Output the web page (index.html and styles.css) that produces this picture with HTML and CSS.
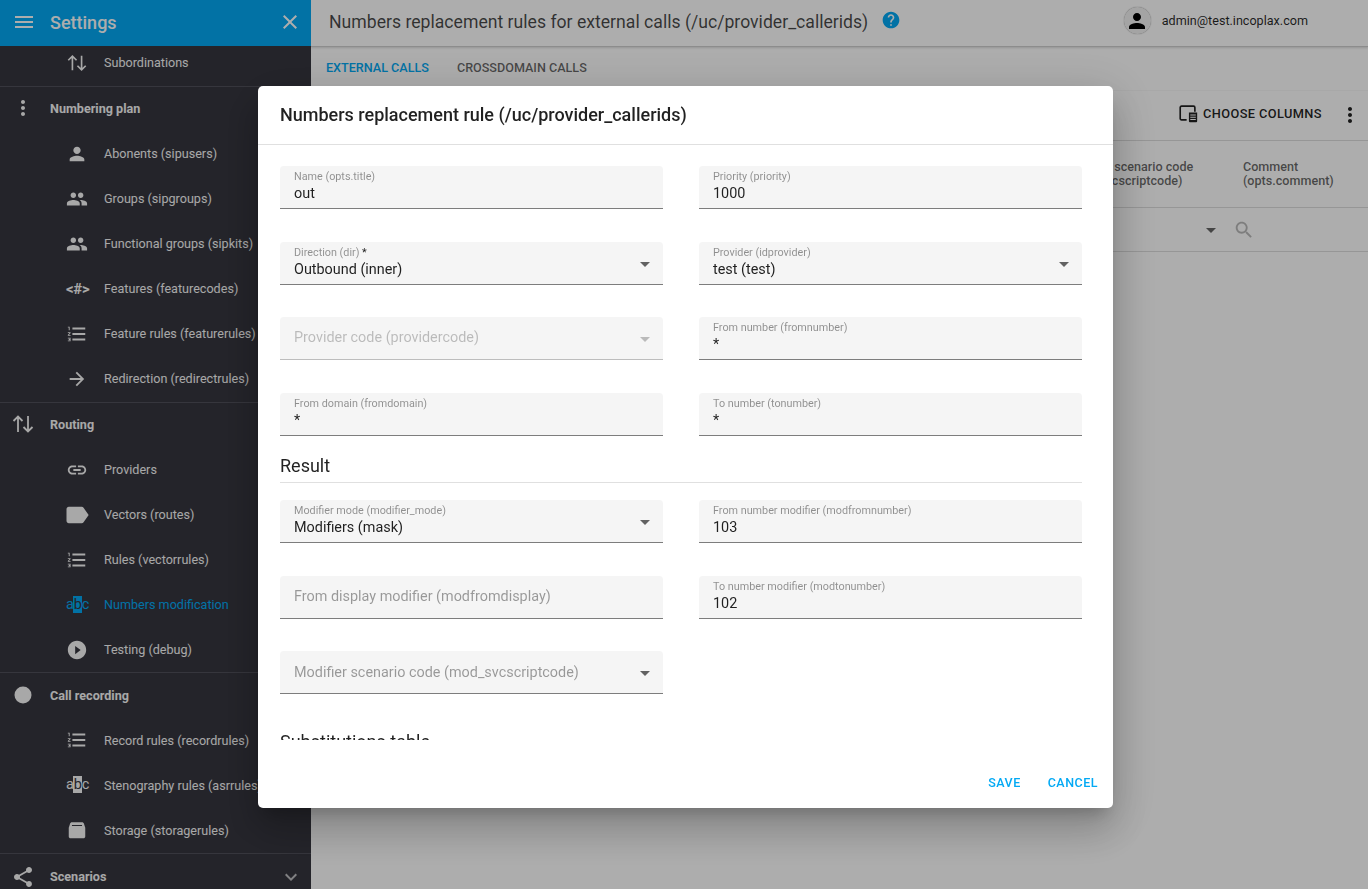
FILE: index.html
```html
<!DOCTYPE html>
<html lang="en">
<head>
<meta charset="utf-8">
<title>Numbers replacement rules</title>
<link rel="stylesheet" href="styles.css">
</head>
<body>
<div class="app">
  <aside class="sidebar">
    <header class="side-head">
      <svg class="ic-24" viewBox="0 0 24 24"><path d="M3 18h18v-2H3v2zm0-5h18v-2H3v2zm0-7v2h18V6H3z"/></svg>
      <span class="side-title">Settings</span>
      <svg class="ic-24 side-close" viewBox="0 0 24 24"><path d="M19 6.410L17.590 5 12 10.590 6.410 5 5 6.410 10.590 12 5 17.590 6.410 19 12 13.410 17.590 19 19 17.590 13.410 12z"/></svg>
    </header>
    <nav class="side-scroll">
      <section class="group first">
        <div class="item"><svg class="ic-item" viewBox="0 0 24 24"><path class="thin" d="M7 20V4.500M2.500 9L7 4.500 11.500 9M17 4v15.500M12.500 15l4.500 4.500 4.500-4.500"/></svg><span>Subordinations</span></div>
      </section>
      <section class="group">
        <div class="group-head"><svg class="ic-group" viewBox="0 0 24 24"><path d="M12 8c1.100 0 2-.9 2-2s-.9-2-2-2-2 .9-2 2 .9 2 2 2zm0 2c-1.100 0-2 .9-2 2s.9 2 2 2 2-.9 2-2-.9-2-2-2zm0 6c-1.100 0-2 .9-2 2s.9 2 2 2 2-.9 2-2-.9-2-2-2z"/></svg><span>Numbering plan</span></div>
        <div class="item"><svg class="ic-item" viewBox="0 0 24 24"><path d="M12 12c2.210 0 4-1.790 4-4s-1.790-4-4-4-4 1.790-4 4 1.790 4 4 4zm0 2c-2.670 0-8 1.340-8 4v2h16v-2c0-2.660-5.330-4-8-4z"/></svg><span>Abonents (sipusers)</span></div>
        <div class="item"><svg class="ic-item" viewBox="0 0 24 24"><path d="M16 11c1.660 0 2.990-1.340 2.990-3S17.660 5 16 5c-1.660 0-3 1.340-3 3s1.340 3 3 3zm-8 0c1.660 0 2.990-1.340 2.990-3S9.660 5 8 5C6.340 5 5 6.340 5 8s1.340 3 3 3zm0 2c-2.330 0-7 1.170-7 3.500V19h14v-2.500c0-2.330-4.670-3.500-7-3.500zm8 0c-.29 0-.62.02-.97.05 1.160.84 1.970 1.970 1.970 3.450V19h6v-2.500c0-2.330-4.670-3.500-7-3.500z"/></svg><span>Groups (sipgroups)</span></div>
        <div class="item"><svg class="ic-item" viewBox="0 0 24 24"><path d="M16 11c1.660 0 2.990-1.340 2.990-3S17.660 5 16 5c-1.660 0-3 1.340-3 3s1.340 3 3 3zm-8 0c1.660 0 2.990-1.340 2.990-3S9.660 5 8 5C6.340 5 5 6.340 5 8s1.340 3 3 3zm0 2c-2.330 0-7 1.170-7 3.500V19h14v-2.500c0-2.330-4.670-3.500-7-3.500zm8 0c-.29 0-.62.02-.97.05 1.160.84 1.970 1.970 1.970 3.450V19h6v-2.500c0-2.330-4.670-3.500-7-3.500z"/></svg><span>Functional groups (sipkits)</span></div>
        <div class="item"><span class="glyph-code">&lt;#&gt;</span><span>Features (featurecodes)</span></div>
        <div class="item"><svg class="ic-item" viewBox="0 0 24 24"><path d="M2 17h2v.5H3v1h1v.5H2v1h3v-4H2v1zm1-9h1V4H2v1h1v3zm-1 3h1.800L2 13.100v.9h3v-1H3.200L5 10.900V10H2v1zm5-6v2h14V5H7zm0 14h14v-2H7v2zm0-6h14v-2H7v2z"/></svg><span>Feature rules (featurerules)</span></div>
        <div class="item"><svg class="ic-item" viewBox="0 0 24 24"><path d="M4 11v2h12L10.500 18.500l1.420 1.420L19.840 12l-7.920-7.920L10.500 5.500 16 11H4z"/></svg><span>Redirection (redirectrules)</span></div>
      </section>
      <section class="group">
        <div class="group-head"><svg class="ic-group" viewBox="0 0 24 24"><path class="thin" d="M7 20V4.500M2.500 9L7 4.500 11.500 9M17 4v15.500M12.500 15l4.500 4.500 4.500-4.500"/></svg><span>Routing</span></div>
        <div class="item"><svg class="ic-item" viewBox="0 0 24 24"><path d="M3.900 12c0-1.710 1.390-3.100 3.100-3.100h4V7H7c-2.760 0-5 2.240-5 5s2.240 5 5 5h4v-1.900H7c-1.710 0-3.100-1.390-3.100-3.100zM8 13h8v-2H8v2zm9-6h-4v1.900h4c1.710 0 3.100 1.390 3.100 3.100s-1.390 3.100-3.100 3.100h-4V17h4c2.760 0 5-2.240 5-5s-2.240-5-5-5z"/></svg><span>Providers</span></div>
        <div class="item"><svg class="ic-item ic-label" viewBox="0 0 24 24"><path d="M17.630 5.840C17.270 5.330 16.670 5 16 5L5 5.010C3.900 5.010 3 5.900 3 7v10c0 1.100.9 1.990 2 1.990L16 19c.67 0 1.270-.33 1.630-.84L22 12l-4.370-6.160z"/></svg><span>Vectors (routes)</span></div>
        <div class="item"><svg class="ic-item" viewBox="0 0 24 24"><path d="M2 17h2v.5H3v1h1v.5H2v1h3v-4H2v1zm1-9h1V4H2v1h1v3zm-1 3h1.800L2 13.100v.9h3v-1H3.200L5 10.900V10H2v1zm5-6v2h14V5H7zm0 14h14v-2H7v2zm0-6h14v-2H7v2z"/></svg><span>Rules (vectorrules)</span></div>
        <div class="item active"><span class="glyph-abc">a<b>b</b>c</span><span>Numbers modification</span></div>
        <div class="item"><svg class="ic-item" viewBox="0 0 24 24"><path d="M12 2C6.480 2 2 6.480 2 12s4.480 10 10 10 10-4.480 10-10S17.520 2 12 2zm-2 14.500v-9l6 4.500-6 4.500z"/></svg><span>Testing (debug)</span></div>
      </section>
      <section class="group">
        <div class="group-head"><svg class="ic-group" viewBox="0 0 24 24"><circle cx="12" cy="12" r="8.500"/></svg><span>Call recording</span></div>
        <div class="item"><svg class="ic-item" viewBox="0 0 24 24"><path d="M2 17h2v.5H3v1h1v.5H2v1h3v-4H2v1zm1-9h1V4H2v1h1v3zm-1 3h1.800L2 13.100v.9h3v-1H3.200L5 10.900V10H2v1zm5-6v2h14V5H7zm0 14h14v-2H7v2zm0-6h14v-2H7v2z"/></svg><span>Record rules (recordrules)</span></div>
        <div class="item"><span class="glyph-abc">a<b>b</b>c</span><span>Stenography rules (asrrules)</span></div>
        <div class="item"><svg class="ic-item" viewBox="0 0 24 24"><path d="M6.500 3.500h11c1 0 1.700.6 2 1.500L21 9.500V19c0 1.100-.9 2-2 2H5c-1.100 0-2-.9-2-2V9.500L4.500 5c.3-.9 1-1.500 2-1.500zM6.500 6.500v1h11v-1z" fill-rule="evenodd"/></svg><span>Storage (storagerules)</span></div>
      </section>
      <section class="group">
        <div class="group-head"><svg class="ic-group" viewBox="0 0 24 24"><path d="M18 16.080c-.76 0-1.440.3-1.960.77L8.910 12.700c.05-.23.09-.46.09-.7s-.04-.47-.09-.7l7.050-4.110c.54.5 1.250.81 2.040.81 1.660 0 3-1.340 3-3s-1.340-3-3-3-3 1.340-3 3c0 .24.04.47.09.7L8.040 9.810C7.500 9.310 6.790 9 6 9c-1.660 0-3 1.340-3 3s1.340 3 3 3c.79 0 1.500-.31 2.040-.81l7.120 4.160c-.05.21-.08.43-.08.65 0 1.610 1.310 2.920 2.920 2.920 1.610 0 2.920-1.310 2.920-2.920s-1.310-2.920-2.920-2.920z"/></svg><span>Scenarios</span><svg class="ic-24 chevron" viewBox="0 0 24 24"><path d="M7.410 8.590L12 13.170l4.590-4.580L18 10l-6 6-6-6 1.410-1.410z"/></svg></div>
      </section>
    </nav>
  </aside>

  <main class="main">
    <header class="topbar">
      <h1 class="page-title">Numbers replacement rules for external calls (/uc/provider_callerids)</h1>
      <svg class="help" viewBox="0 0 24 24"><path d="M12 2C6.480 2 2 6.480 2 12s4.480 10 10 10 10-4.480 10-10S17.520 2 12 2zm1 17h-2v-2h2v2zm2.070-7.750l-.9.92C13.450 12.900 13 13.500 13 15h-2v-.5c0-1.100.45-2.100 1.170-2.830l1.240-1.260c.37-.36.59-.86.59-1.410 0-1.100-.9-2-2-2s-2 .9-2 2H8c0-2.210 1.790-4 4-4s4 1.790 4 4c0 .88-.36 1.680-.93 2.250z"/></svg>
      <div class="user">
        <span class="avatar"><svg viewBox="0 0 24 24"><path d="M12 12c2.210 0 4-1.790 4-4s-1.790-4-4-4-4 1.790-4 4 1.790 4 4 4zm0 2c-2.670 0-8 1.340-8 4v2h16v-2c0-2.660-5.330-4-8-4z"/></svg></span>
        <span class="user-name">admin@test.incoplax.com</span>
      </div>
    </header>
    <div class="tabs">
      <span class="tab current">EXTERNAL CALLS</span>
      <span class="tab">CROSSDOMAIN CALLS</span>
    </div>
    <div class="card">
      <div class="toolbar">
        <svg class="columns-ic" viewBox="0 0 24 24"><path class="line" d="M10.500 19.500H5c-1 0-1.500-.6-1.500-1.500V6c0-1 .5-1.500 1.500-1.500h13c1 0 1.500.5 1.500 1.500v4.500"/><path d="M13 11.500h9v9.500c0 .6-.4 1-1 1h-7c-.6 0-1-.4-1-1zm1.500 2v1.200h6v-1.200zm0 2.500v1.200h6V16zm0 2.500v1.200h6v-1.200z" fill-rule="evenodd"/></svg>
        <span class="choose">CHOOSE COLUMNS</span>
        <svg class="ic-24 dark" viewBox="0 0 24 24"><path d="M12 8c1.100 0 2-.9 2-2s-.9-2-2-2-2 .9-2 2 .9 2 2 2zm0 2c-1.100 0-2 .9-2 2s.9 2 2 2 2-.9 2-2-.9-2-2-2zm0 6c-1.100 0-2 .9-2 2s.9 2 2 2 2-.9 2-2-.9-2-2-2z"/></svg>
      </div>
      <div class="thead">
        <span class="th th-code">Modifier scenario code<br>(mod_svcscriptcode)</span>
        <span class="th th-comment">Comment<br>(opts.comment)</span>
      </div>
      <div class="tfilter">
        <svg class="ic-24 filter-drop" viewBox="0 0 24 24"><path d="M7 10l5 5 5-5z"/></svg>
        <svg class="ic-24 filter-search" viewBox="0 0 24 24"><path d="M15.500 14h-.79l-.28-.27C15.410 12.590 16 11.110 16 9.500 16 5.910 13.090 3 9.500 3S3 5.910 3 9.500 5.910 16 9.500 16c1.610 0 3.090-.59 4.230-1.570l.27.28v.79l5 4.990L20.490 19l-4.990-5zm-6 0C7.010 14 5 11.990 5 9.500S7.010 5 9.500 5 14 7.010 14 9.500 11.990 14 9.500 14z"/></svg>
      </div>
    </div>
  </main>
</div>

<div class="scrim">
  <div class="dialog">
    <h2 class="dialog-title">Numbers replacement rule (/uc/provider_callerids)</h2>
    <div class="dialog-body">
      <div class="form-grid">
        <div class="field"><label>Name (opts.title)</label><div class="value">out</div></div>
        <div class="field"><label>Priority (priority)</label><div class="value">1000</div></div>
        <div class="field select"><label>Direction (dir) <em>*</em></label><div class="value">Outbound (inner)</div><svg class="drop" viewBox="0 0 24 24"><path d="M7 10l5 5 5-5z"/></svg></div>
        <div class="field select"><label>Provider (idprovider)</label><div class="value">test (test)</div><svg class="drop" viewBox="0 0 24 24"><path d="M7 10l5 5 5-5z"/></svg></div>
        <div class="field select disabled empty"><div class="hint">Provider code (providercode)</div><svg class="drop" viewBox="0 0 24 24"><path d="M7 10l5 5 5-5z"/></svg></div>
        <div class="field"><label>From number (fromnumber)</label><div class="value">*</div></div>
        <div class="field"><label>From domain (fromdomain)</label><div class="value">*</div></div>
        <div class="field"><label>To number (tonumber)</label><div class="value">*</div></div>
      </div>
      <h3 class="section-title">Result</h3>
      <div class="form-grid">
        <div class="field select"><label>Modifier mode (modifier_mode)</label><div class="value">Modifiers (mask)</div><svg class="drop" viewBox="0 0 24 24"><path d="M7 10l5 5 5-5z"/></svg></div>
        <div class="field"><label>From number modifier (modfromnumber)</label><div class="value">103</div></div>
        <div class="field empty"><div class="hint">From display modifier (modfromdisplay)</div></div>
        <div class="field"><label>To number modifier (modtonumber)</label><div class="value">102</div></div>
        <div class="field select empty"><div class="hint">Modifier scenario code (mod_svcscriptcode)</div><svg class="drop" viewBox="0 0 24 24"><path d="M7 10l5 5 5-5z"/></svg></div>
      </div>
      <h3 class="section-title table-title">Substitutions table</h3>
    </div>
    <div class="dialog-actions">
      <span class="action">SAVE</span>
      <span class="action">CANCEL</span>
    </div>
  </div>
</div>
</body>
</html>
```
FILE: styles.css
```css
* { box-sizing: border-box; }
html, body { margin: 0; height: 100%; overflow: hidden; }
body { font-family: Roboto, "Liberation Sans", sans-serif; background: #fff; color: rgba(0,0,0,.87); }
svg { display: block; flex: none; fill: currentColor; }
h1, h2, h3 { margin: 0; font-weight: 400; }
.thin { fill: none; stroke: currentColor; stroke-width: 1.800; }
.line { fill: none; stroke: currentColor; stroke-width: 1.800; }

.app { display: flex; height: 889px; }

/* sidebar */
.sidebar { width: 311px; flex: none; display: flex; flex-direction: column; background: #36363f; color: #f8f8f8; height: 889px; overflow: hidden; }
.side-head { height: 46px; flex: none; display: flex; align-items: center; padding: 0 9px 2px 12px; background: #03a9f4; color: #fff; position: relative; z-index: 1; }
.side-title { font-size: 18px; font-weight: 500; margin-left: 14px; flex: 1; }
.ic-24 { width: 24px; height: 24px; }
.side-scroll { flex: 1; min-height: 0; overflow: hidden; }
.group { border-bottom: 1px solid #50505a; }
.group.first { margin-top: -6px; padding-bottom: 1px; }
.group-head { height: 44.670px; display: flex; align-items: center; font-size: 12.600px; font-weight: 700; padding: 0 0 1px 11px; }
.group:nth-child(2) { padding-bottom: .5px; }
.group:nth-child(2) .group-head { height: 44.170px; padding-bottom: 2px; }
.group:last-child .group-head { padding-bottom: 0; height: 46px; }
.group-head > span { flex: 1; margin-left: 15px; }
.chevron { width: 24px; height: 24px; margin-right: 8px; opacity: .7; }
.ic-group { width: 24px; height: 24px; }
.item { height: 45px; display: flex; align-items: center; font-size: 12.600px; padding-left: 66px; white-space: nowrap; }
.item > span:last-child { margin-left: 16px; }
.ic-item { width: 22px; height: 22px; }
.ic-label { width: 28px; height: 28px; margin: 0 -3px; }
.item.active { color: #03a9f4; }
.glyph-code { width: 22px; font-size: 15px; font-weight: 700; text-align: center; letter-spacing: -.3px; }
.glyph-abc { width: 22px; font-size: 14.500px; text-align: center; letter-spacing: -.6px; line-height: 18px; }
.glyph-abc b { font-weight: 400; color: #36363f; padding: 0 .5px; background: #f8f8f8; }
.item.active > .glyph-abc b { background: #03a9f4; }

/* main page */
.main { flex: 1; min-width: 0; display: flex; flex-direction: column; }
.topbar { height: 47px; flex: none; display: flex; align-items: center; padding: 0 0 2px 18px; border-bottom: 1px solid #cfcfcf; box-shadow: 0 1px 2px rgba(0,0,0,.15); }
.page-title { font-size: 17.640px; color: rgba(0,0,0,.72); white-space: nowrap; }
.help { width: 20px; height: 20px; margin-left: 13px; color: #03a9f4; margin-top: -4px; }
.user { margin-left: auto; display: flex; align-items: center; padding-right: 60px; margin-top: -3px; }
.avatar { width: 27px; height: 27px; border-radius: 50%; background: #f2f2f2; box-shadow: 0 0 1px rgba(0,0,0,.5); display: flex; align-items: center; justify-content: center; color: #000; }
.avatar svg { width: 24px; height: 24px; }
.user-name { margin-left: 11px; font-size: 12.600px; color: rgba(0,0,0,.85); }
.tabs { height: 43px; flex: none; display: flex; align-items: center; padding: 0 0 2px 15px; gap: 28px; font-size: 12.600px; font-weight: 500; }
.tab { color: rgba(0,0,0,.6); }
.tab.current { color: #03a9f4; }
.card { flex: none; }
.toolbar { height: 51px; display: flex; align-items: center; justify-content: flex-end; padding: 0 6px 5px 0; border-bottom: 1px solid #ddd; border-top: 1px solid #f8f8f8; }
.toolbar .dark { margin-top: 3px; }
.columns-ic { width: 22px; height: 22px; }
.choose { margin: 0 16px 0 4px; font-size: 12.800px; font-weight: 500; letter-spacing: .4px; color: rgba(0,0,0,.87); }
.dark { color: rgba(0,0,0,.87); }
.thead { height: 67px; display: flex; justify-content: flex-end; align-items: center; border-bottom: 1px solid #ddd; }
.th { font-size: 12.600px; font-weight: 500; line-height: 14px; color: rgba(0,0,0,.6); white-space: nowrap; }
.th-code { width: 179px; }
.th-comment { width: 125px; }
.tfilter { height: 44px; display: flex; align-items: center; justify-content: flex-end; border-bottom: 1px solid #ddd; padding-right: 113px; color: rgba(0,0,0,.6); }
.filter-search { width: 22px; height: 22px; margin-left: 10px; opacity: .45; }

/* dialog */
.scrim { position: fixed; inset: 0; z-index: 10; background: rgba(0,0,0,.32); display: flex; padding: 86px 255px 81px 258px; }
.dialog { flex: 1; min-width: 0; display: flex; flex-direction: column; background: #fff; border-radius: 5px; box-shadow: 0 11px 15px -7px rgba(0,0,0,.2), 0 24px 38px 3px rgba(0,0,0,.14), 0 9px 46px 8px rgba(0,0,0,.12); }
.dialog-title { height: 59px; flex: none; padding: 0 22px 1px; display: flex; align-items: center; font-size: 18px; font-weight: 500; border-bottom: 1px solid #e0e0e0; }
.dialog-body { flex: 1; min-height: 0; overflow: hidden; padding: 21px 31px 0 22px; }
.form-grid { display: grid; grid-template-columns: 1fr 1fr; column-gap: 36px; row-gap: 32.500px; }
.field { height: 43px; background: #f5f5f5; border-radius: 4px 4px 0 0; border-bottom: 1px solid #7d7d7d; padding: 5px 14px 0; position: relative; }
.field label { display: block; font-size: 10.800px; line-height: 12px; color: rgba(0,0,0,.42); }
.field label em { font-style: normal; color: rgba(0,0,0,.87); }
.value { font-size: 14.400px; line-height: 20px; margin-top: 1px; }
.field.empty { padding-top: 11px; }
.field.empty:last-child { padding-top: 12px; }
.hint { font-size: 14.400px; line-height: 20px; color: rgba(0,0,0,.38); }
.drop { position: absolute; right: 6px; top: 10px; width: 24px; height: 24px; color: rgba(0,0,0,.6); }
.disabled { border-bottom-color: #bdbdbd; }
.disabled .hint { color: rgba(0,0,0,.24); }
.disabled .drop { color: rgba(0,0,0,.24); }
.section-title { font-size: 18px; line-height: 22px; height: 47px; margin-bottom: 17.500px; padding-top: 19px; border-bottom: 1px solid #e0e0e0; }
.table-title { border: 0; padding-top: 37px; height: 70px; }
.dialog-actions { height: 68px; flex: none; display: flex; justify-content: flex-end; align-items: flex-start; gap: 27px; padding: 35px 15px 0 0; font-size: 12.500px; font-weight: 500; letter-spacing: .5px; color: #03a9f4; }
```
